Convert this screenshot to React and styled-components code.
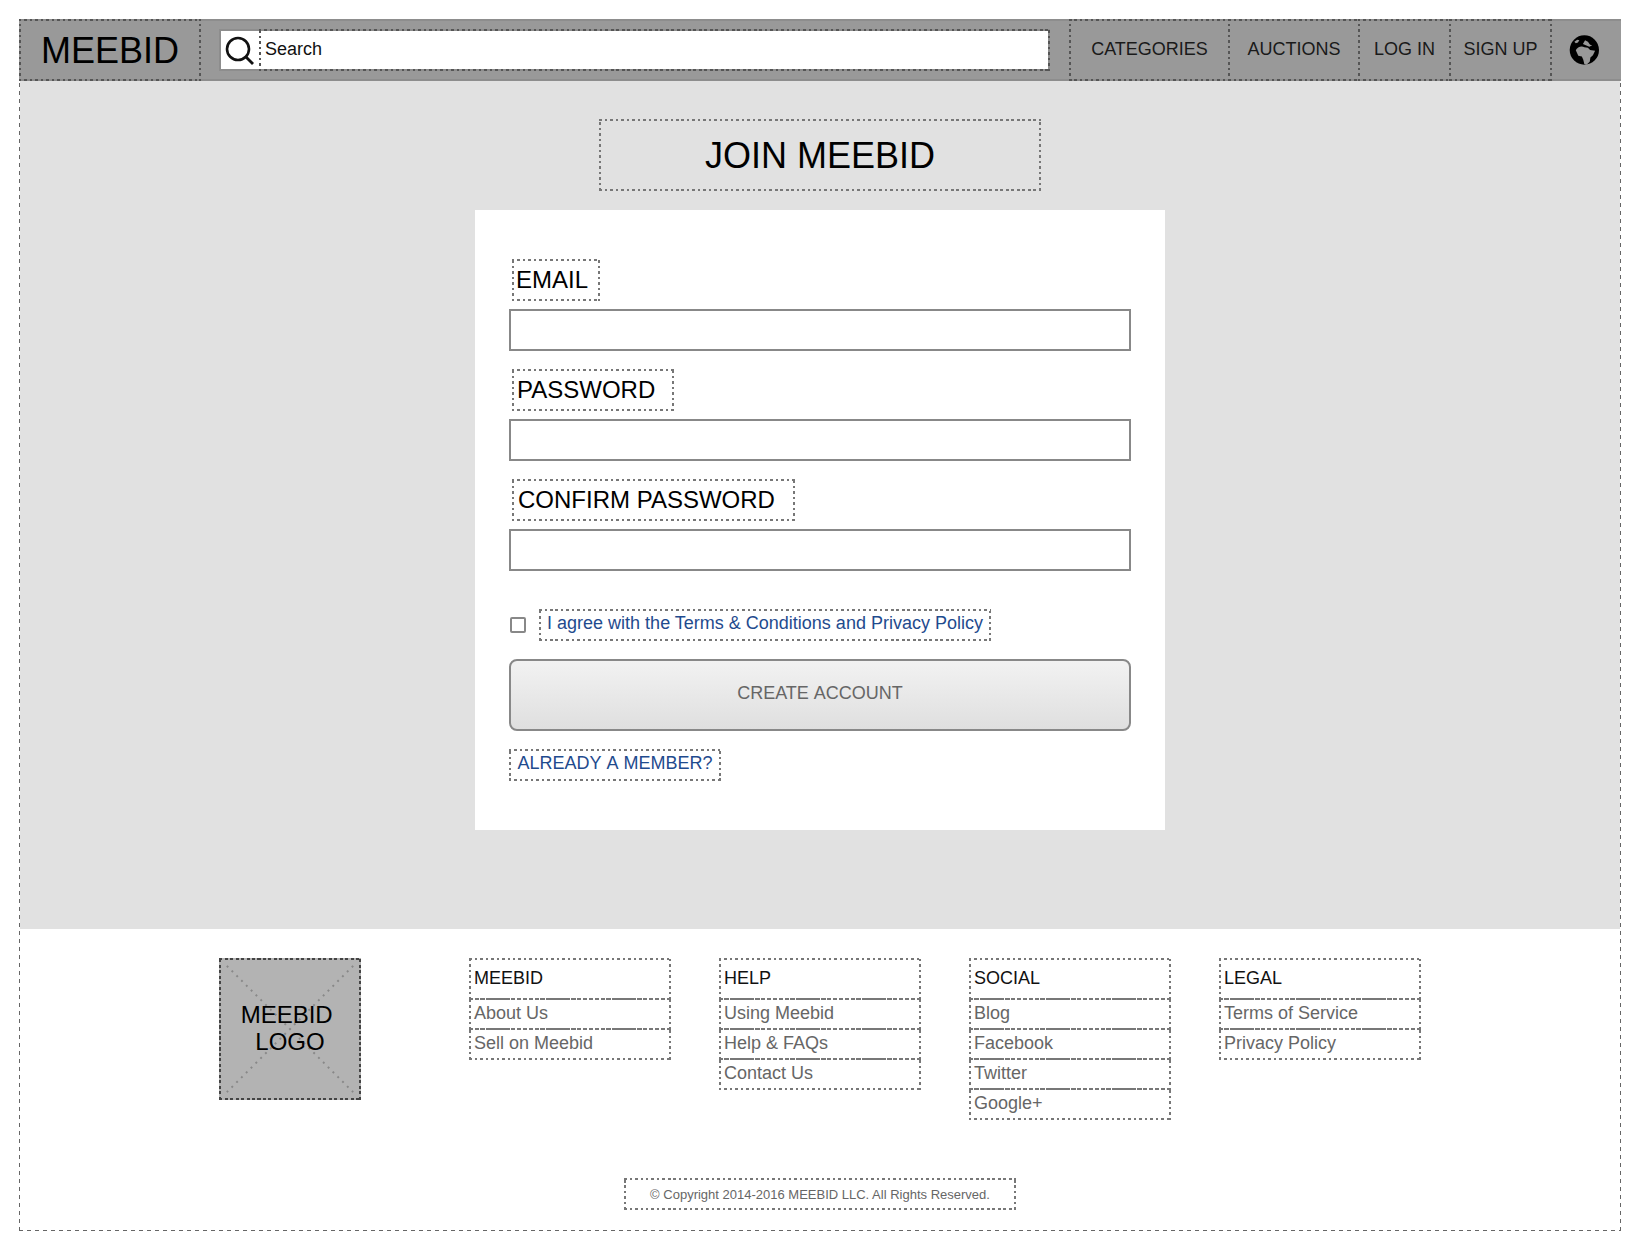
import React from 'react';
import styled, { createGlobalStyle, css } from 'styled-components';

const GlobalStyle = createGlobalStyle`
  html, body {
    margin: 0;
    padding: 0;
    background: #fff;
    font-family: "Liberation Sans", Arial, sans-serif;
  }
  * { box-sizing: border-box; }
`;

// browser's own dotted border is too dense, so the dots are drawn as gradients
const dots = (color, width = 2, on = 2.5, off = 3) => css`
  border: ${width}px solid transparent;
  background-origin: border-box;
  background-clip: border-box;
  background-repeat: no-repeat;
  background-image:
    repeating-linear-gradient(90deg, ${color} 0 ${on}px, transparent ${on}px ${on + off}px),
    repeating-linear-gradient(90deg, ${color} 0 ${on}px, transparent ${on}px ${on + off}px),
    repeating-linear-gradient(0deg, ${color} 0 ${on}px, transparent ${on}px ${on + off}px),
    repeating-linear-gradient(0deg, ${color} 0 ${on}px, transparent ${on}px ${on + off}px);
  background-size: 100% ${width}px, 100% ${width}px, ${width}px 100%, ${width}px 100%;
  background-position: 0 0, 0 100%, 0 0, 100% 0;
`;

const Frame = styled.div`
  width: 1602px;
  margin: 19px 0 19px 19px;
  ${dots('#666', 1, 4, 4)}
  border-top: 0;
`;

const Header = styled.header`
  display: flex;
  align-items: stretch;
  height: 62px;
  margin: 0 -1px;
  background: #999;
  border: 2px solid #8d8d8d;
  border-left: 0;
  border-right: 0;
  color: #1a1a1a;
`;

const Logo = styled.div`
  ${dots('#555')}
  width: 182px;
  margin: -2px 0;
  padding-top: 2px;
  display: flex;
  align-items: center;
  justify-content: center;
  font-size: 36px;
  color: #000;
`;

const SearchBar = styled.div`
  display: flex;
  width: 831px;
  height: 42px;
  margin: 8px 0 0 18px;
  background: #fff;
  border: 2px solid #8d8d8d;
`;

const SearchIcon = styled.svg`
  width: 38px;
  height: 38px;
  flex: none;
`;

const SearchInput = styled.div`
  ${dots('#555')}
  flex: 1;
  margin: -2px -2px -2px 0;
  padding: 0 0 2px 4px;
  display: flex;
  align-items: center;
  font-size: 18px;
  color: #111;
`;

const Nav = styled.nav`
  display: flex;
  margin: -2px 0 -2px 21px;
`;

const NavItem = styled.div`
  ${dots('#555')}
  width: ${p => p.$w}px;
  margin-left: -2px;
  display: flex;
  align-items: center;
  justify-content: center;
  font-size: 18px;
  padding-bottom: 2px;
`;

const GlobeSlot = styled.div`
  flex: 1;
  display: flex;
  align-items: center;
  justify-content: center;
  padding-right: 5px;
`;

const Main = styled.main`
  height: 848px;
  padding-top: 38px;
  background: #e1e1e1;
  display: flex;
  flex-direction: column;
  align-items: center;
`;

const Title = styled.h1`
  ${dots('#777')}
  width: 442px;
  height: 72px;
  margin: 0;
  padding-top: 2px;
  display: flex;
  align-items: center;
  justify-content: center;
  font-size: 36px;
  font-weight: 400;
  color: #000;
`;

const Card = styled.section`
  width: 690px;
  height: 620px;
  margin-top: 19px;
  padding: 49px 34px 0;
  background: #fff;
`;

const Field = styled.div`
  margin-bottom: 18px;
`;

const FieldLabel = styled.label`
  ${dots('#777')}
  display: flex;
  align-items: center;
  width: ${p => p.$w}px;
  height: 42px;
  margin-left: 3px;
  padding-left: ${p => p.$pad}px;
  font-size: 24px;
  color: #000;
`;

const TextInput = styled.input`
  display: block;
  width: 100%;
  height: 42px;
  margin-top: 8px;
  border: 2px solid #888;
  background: #fff;
`;

const AgreeRow = styled.div`
  display: flex;
  align-items: center;
  margin-top: 38px;
`;

const Checkbox = styled.span`
  width: 16px;
  height: 16px;
  margin: 0 13px 0 1px;
  border: 2px solid #888;
  border-radius: 2px;
`;

const BlueLink = styled.a`
  ${dots('#777')}
  display: flex;
  align-items: center;
  justify-content: center;
  width: ${p => p.$w}px;
  height: 32px;
  padding-bottom: 3px;
  font-size: 18px;
  color: #1f4b8e;
`;

const MemberLink = styled(BlueLink)`
  font-kerning: none;
`;

const CreateButton = styled.button`
  display: block;
  width: 100%;
  height: 72px;
  margin: 18px 0;
  padding-bottom: 4px;
  border: 2px solid #888;
  border-radius: 8px;
  background: linear-gradient(#f2f2f2, #dfdfdf);
  font: 18px "Liberation Sans", Arial, sans-serif;
  word-spacing: 1px;
  color: #666;
`;

const Footer = styled.footer`
  height: 301px;
  padding-top: 29px;
`;

const FooterColumns = styled.div`
  display: flex;
  gap: 48px;
  margin-left: 199px;
  height: 220px;
  align-items: flex-start;
`;

const FooterLogo = styled.div`
  ${dots('#444', 2, 3, 2.5)}
  position: relative;
  width: 142px;
  height: 142px;
  padding-bottom: 2px;
  display: flex;
  align-items: center;
  justify-content: center;
  text-align: center;
  background-color: #b3b3b3;
  font-size: 24px;
  line-height: 27px;
  color: #000;
  margin-right: 60px;
`;

const Cross = styled.svg`
  position: absolute;
  inset: 0;
  width: 100%;
  height: 100%;
`;

const LogoText = styled.span`
  position: relative;
`;

const LinkList = styled.ul`
  list-style: none;
  width: 202px;
  margin: 0;
  padding: 0;
  font-size: 18px;
`;

const ListHeading = styled.li`
  ${dots('#777')}
  height: 42px;
  padding: 8px 3px 0;
  color: #111;
`;

const ListItem = styled.li`
  ${dots('#777')}
  height: 32px;
  margin-top: -2px;
  padding: 1px 3px 0;
  color: #666;
  line-height: 25px;
  background-image:
    repeating-linear-gradient(90deg, #777 0 4px, transparent 4px 6px),
    repeating-linear-gradient(90deg, #777 0 2.5px, transparent 2.5px 5.5px),
    repeating-linear-gradient(0deg, #777 0 2.5px, transparent 2.5px 5.5px),
    repeating-linear-gradient(0deg, #777 0 2.5px, transparent 2.5px 5.5px);
`;

const Copyright = styled.div`
  ${dots('#777')}
  width: 392px;
  height: 32px;
  margin: 0 auto;
  padding-top: 1px;
  display: flex;
  align-items: center;
  justify-content: center;
  font-size: 13px;
  color: #666;
`;

const navItems = [
  { label: 'CATEGORIES', w: 161 },
  { label: 'AUCTIONS', w: 132 },
  { label: 'LOG IN', w: 93 },
  { label: 'SIGN UP', w: 103 },
];

const fields = [
  { label: 'EMAIL', w: 88, pad: 2 },
  { label: 'PASSWORD', w: 162, pad: 3 },
  { label: 'CONFIRM PASSWORD', w: 283, pad: 4 },
];

const footerLists = [
  { title: 'MEEBID', links: ['About Us', 'Sell on Meebid'] },
  { title: 'HELP', links: ['Using Meebid', 'Help & FAQs', 'Contact Us'] },
  { title: 'SOCIAL', links: ['Blog', 'Facebook', 'Twitter', 'Google+'] },
  { title: 'LEGAL', links: ['Terms of Service', 'Privacy Policy'] },
];

const Globe = () => (
  <svg width="30" height="30" viewBox="19 15 84 84">
    <circle cx="62" cy="57" r="41" fill="#000" />
    <g fill="#999">
      <path d="M38 58C42 48 54 45 62 49L72 51L78 57L92 59L86 72L79 78L77 90L68 98L62 97L59 84L55 75L45 73Z" />
      <path d="M58 40L64 30L72 34L78 42L84 44L76 48L66 44Z" />
      <path d="M34 34L42 28L48 30L44 36L38 38Z" />
    </g>
  </svg>
);

const App = () => (
  <Frame>
    <GlobalStyle />
    <Header>
      <Logo>MEEBID</Logo>
      <SearchBar>
        <SearchIcon viewBox="0 0 38 38">
          <circle cx="17" cy="18" r="11" fill="none" stroke="#111" strokeWidth="2.6" />
          <line x1="25" y1="26" x2="32" y2="33" stroke="#111" strokeWidth="2.8" />
        </SearchIcon>
        <SearchInput>Search</SearchInput>
      </SearchBar>
      <Nav>
        {navItems.map(item => (
          <NavItem key={item.label} $w={item.w}>{item.label}</NavItem>
        ))}
      </Nav>
      <GlobeSlot><Globe /></GlobeSlot>
    </Header>

    <Main>
      <Title>JOIN MEEBID</Title>
      <Card>
        {fields.map(field => (
          <Field key={field.label}>
            <FieldLabel $w={field.w} $pad={field.pad}>{field.label}</FieldLabel>
            <TextInput type="text" />
          </Field>
        ))}
        <AgreeRow>
          <Checkbox />
          <BlueLink $w={452}>I agree with the Terms &amp; Conditions and Privacy Policy</BlueLink>
        </AgreeRow>
        <CreateButton>CREATE ACCOUNT</CreateButton>
        <MemberLink $w={212}>ALREADY A MEMBER?</MemberLink>
      </Card>
    </Main>

    <Footer>
      <FooterColumns>
        <FooterLogo>
          <Cross viewBox="0 0 142 142">
            <path d="M6 6L136 136M136 6L6 136" stroke="#888" strokeWidth="2" strokeDasharray="2 5" />
          </Cross>
          <LogoText>MEEBID&nbsp;<br />LOGO</LogoText>
        </FooterLogo>
        {footerLists.map(list => (
          <LinkList key={list.title}>
            <ListHeading>{list.title}</ListHeading>
            {list.links.map(link => (
              <ListItem key={link}>{link}</ListItem>
            ))}
          </LinkList>
        ))}
      </FooterColumns>
      <Copyright>© Copyright 2014-2016 MEEBID LLC. All Rights Reserved.</Copyright>
    </Footer>
  </Frame>
);

export default App;
